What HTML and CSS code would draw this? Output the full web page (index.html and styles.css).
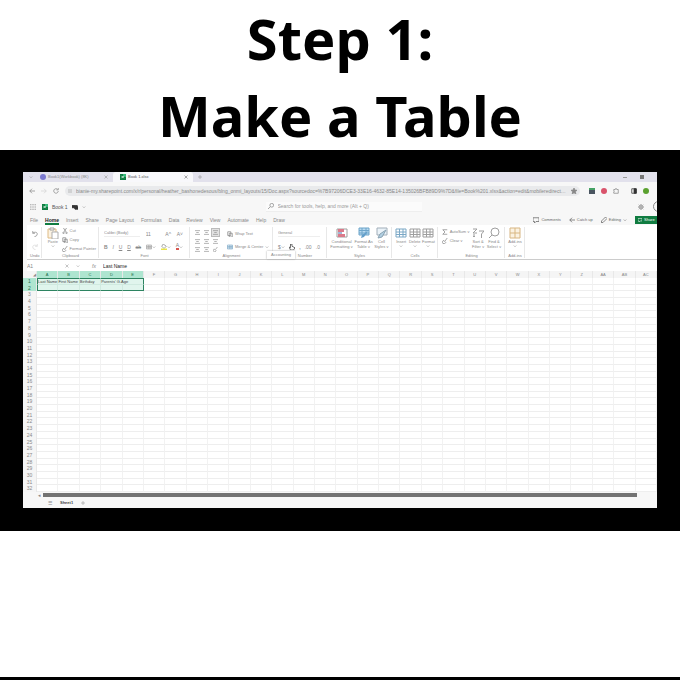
FILE: index.html
```html
<!DOCTYPE html>
<html lang="en">
<head>
  <meta charset="UTF-8" />
  <meta name="viewport" content="width=device-width, initial-scale=1" />
  <title>Step 1: Make a Table</title>
  <link rel="stylesheet" href="styles.css">
</head>
<body>
  <svg class="defs" aria-hidden="true">
    <symbol id="i-down" viewBox="0 0 8 8"><path d="M1.500 3l2.500 2.500L6.500 3" /></symbol>
    <symbol id="i-close" viewBox="0 0 8 8"><path d="M1 1l6 6M7 1L1 7" /></symbol>
    <symbol id="i-plus" viewBox="0 0 8 8"><path d="M4 0v8M0 4h8" /></symbol>
    <symbol id="i-back" viewBox="0 0 8 8"><path d="M8 4H1M4 1L1 4l3 3" /></symbol>
    <symbol id="i-forward" viewBox="0 0 8 8"><path d="M0 4h7M4 1l3 3-3 3" /></symbol>
    <symbol id="i-reload" viewBox="0 0 8 8"><path d="M7 4a3 3 0 1 1-1-2.300M7 0v2.500H4.500" /></symbol>
    <symbol id="i-tune" viewBox="0 0 8 8"><path d="M0 2h3M5 2h3M0 6h2M4 6h4M4 1v2M3 5v2" /></symbol>
    <symbol id="i-star" viewBox="0 0 8 8"><path d="M4 0l1.200 2.800L8 3 5.800 5 6.500 8 4 6.400 1.500 8l.7-3L0 3l2.800-.2z" fill="currentColor" /></symbol>
    <symbol id="i-search" viewBox="0 0 8 8"><circle cx="5" cy="3" r="2.500" /><path d="M3 5L0 8" /></symbol>
    <symbol id="i-find" viewBox="0 0 12 12"><circle cx="7" cy="5" r="4" /><path d="M4 8L1 11" /></symbol>
    <symbol id="i-puzzle" viewBox="0 0 8 8"><path d="M1 2h2c0-2 2-2 2 0h2v5H1V5c1 0 1-1.500 0-1.500z" /></symbol>
    <symbol id="i-panel" viewBox="0 0 8 8"><path d="M1 1h6v6H1z" /><path d="M4 1h3v6H4z" fill="currentColor" /></symbol>
    <symbol id="i-dots" viewBox="0 0 8 8"><path d="M0 1h2M3 1h2M6 1h2M0 4h2M3 4h2M6 4h2M0 7h2M3 7h2M6 7h2" /></symbol>
    <symbol id="i-excel" viewBox="0 0 8 8"><path d="M0 0h8v8H0z" fill="#107c41" stroke="none" /><path d="M4 0h4v4H4z" fill="#35b877" stroke="none" /><path d="M2 2.500l3 3M5 2.500l-3 3" stroke="#fff" /></symbol>
    <symbol id="i-cloud" viewBox="0 0 8 8"><path d="M0 2h3v3H0zM3 2h4l1 2v3H4L3 5z" fill="currentColor" /></symbol>
    <symbol id="i-gear" viewBox="0 0 8 8"><circle cx="4" cy="4" r="2.500" /><circle cx="4" cy="4" r="1" /><path d="M4 0v1.500M4 6.500V8M0 4h1.500M6.500 4H8M1 1l1 1M6 6l1 1M7 1L6 2M2 6L1 7" /></symbol>
    <symbol id="i-comment" viewBox="0 0 8 8"><path d="M0 1h8v5H4L2 8V6H0z" /></symbol>
    <symbol id="i-pen" viewBox="0 0 8 8"><path d="M0 8l1-3 5-5 2 2-5 5z" /></symbol>
    <symbol id="i-undo" viewBox="0 0 8 8"><path d="M1 0v3h3M1 3c2-2 6-2 6 1S4 7 3 8" /></symbol>
    <symbol id="i-redo" viewBox="0 0 8 8"><path d="M7 0v3H4M7 3C5 1 1 1 1 4s3 3 4 4" /></symbol>
    <symbol id="i-paste" viewBox="0 0 12 12"><path d="M1 2h8v9H1z" fill="#fbf0dc" stroke="#d8ab66" /><path d="M3 1h4v2H3z" fill="#fff" stroke="#888" /><path d="M5 5h6v7H5z" fill="#fff" stroke="#999" /></symbol>
    <symbol id="i-cut" viewBox="0 0 8 8"><path d="M2 0l3 5M6 0L3 5" /><circle cx="2" cy="6.500" r="1" /><circle cx="6" cy="6.500" r="1" /></symbol>
    <symbol id="i-copy" viewBox="0 0 8 8"><path d="M1 1h4v5H1zM3 3h4v5H3z" /></symbol>
    <symbol id="i-brush" viewBox="0 0 8 8"><path d="M7 0L4 4M2 3l3 3-2 2-3-2z" /></symbol>
    <symbol id="i-lines" viewBox="0 0 8 8"><path d="M0 1h8M2 4h4M0 7h8" /></symbol>
    <symbol id="i-grid" viewBox="0 0 12 10"><path d="M1 1h10v8H1zM1 4h10M1 6.500h10M4.500 1v8M8 1v8" /></symbol>
    <symbol id="i-cond" viewBox="0 0 12 10"><path d="M1 1h10v8H1z" fill="#fff" stroke="#888" /><path d="M2 1h6v3H2zM2 6h7v3H2z" fill="#d35a6e" stroke="none" /><path d="M2 4h4v2H2z" fill="#8aa6ce" stroke="none" /></symbol>
    <symbol id="i-ftable" viewBox="0 0 12 12"><path d="M1 1h10v7H1z" fill="#a9d3ee" stroke="#4a8fbd" /><path d="M1 3.500h10M1 6h10M4 1v7M8 1v7" stroke="#4a8fbd" /><path d="M10 4L6 10l-3 1 1-3z" fill="#3b87bd" stroke="none" /></symbol>
    <symbol id="i-styles" viewBox="0 0 12 12"><path d="M1 1h10v7H1z" fill="#e7f1f8" stroke="#8b9ba8" /><path d="M10 3L6 10l-4 1 2-4z" fill="#9fc5dd" stroke="#6d8ca0" /></symbol>
    <symbol id="i-sum" viewBox="0 0 8 8"><path d="M7 1H1l3 3-3 3h6" /></symbol>
    <symbol id="i-sort" viewBox="0 0 12 10"><path d="M1 1h4L1 5h4M7 3h5L9.500 6v4M2 6v3M1 8l1 1 1-1" /></symbol>
    <symbol id="i-addins" viewBox="0 0 12 12"><path d="M1 1h10v10H1zM6 1v10M1 6h10" fill="#fbf0dc" /></symbol>
    <symbol id="i-fill" viewBox="0 0 8 8"><path d="M3 0l4 3-3 3-3-3z" /><path d="M0 7h8" stroke="#e9e44a" stroke-width="2" /></symbol>
    <symbol id="i-hand" viewBox="0 0 8 8"><path d="M2 0v5L0 4l2 4h4l2-3-4-2V0z" fill="#fff" stroke="#444" /></symbol>
  </svg>

  <h1>Step 1:<br>Make a Table</h1>

  <main class="frame">
    <div class="screen">
      <div class="tabstrip">
        <svg class="icon tiny"><use href="#i-down" /></svg>
        <a class="tab" href="#"><span class="dot purple"></span><span class="tab-name">Book1(Workbook) (8K)</span><svg class="icon tiny"><use href="#i-close" /></svg></a>
        <a class="tab active" href="#"><svg class="icon"><use href="#i-excel" /></svg><span class="tab-name">Book 1.xlsx</span><svg class="icon tiny"><use href="#i-close" /></svg></a>
        <button class="new-tab" aria-label="New tab"><svg class="icon tiny"><use href="#i-plus" /></svg></button>
        <div class="win-buttons"><span class="min"></span><span class="restore"></span></div>
      </div>

      <div class="address">
        <button aria-label="Back"><svg class="icon"><use href="#i-back" /></svg></button>
        <button class="faded" aria-label="Forward"><svg class="icon"><use href="#i-forward" /></svg></button>
        <button aria-label="Reload"><svg class="icon"><use href="#i-reload" /></svg></button>
        <div class="url">
          <svg class="icon tiny"><use href="#i-tune" /></svg>
          <input type="text" aria-label="Address" value="bianie-my.sharepoint.com/x/r/personal/heather_bashonedesous/blng_onmi_layouts/15/Doc.aspx?sourcedoc=%7B97206DCE3-33E16-4632-85E14-135026BFB89D9%7D&amp;file=Book%201.xlsx&amp;action=edit&amp;mobileredirect=doublebiffesouth...">
          <svg class="icon"><use href="#i-star" /></svg>
        </div>
        <div class="extensions">
          <span class="ext-badge"></span>
          <span class="dot red"></span>
          <svg class="icon"><use href="#i-puzzle" /></svg>
          <svg class="icon panel"><use href="#i-panel" /></svg>
          <span class="dot green"></span>
        </div>
      </div>

      <header class="app-header">
        <div class="doc">
          <svg class="icon"><use href="#i-dots" /></svg>
          <svg class="icon"><use href="#i-excel" /></svg>
          <span class="doc-name">Book 1</span>
          <svg class="icon dark"><use href="#i-cloud" /></svg>
          <svg class="icon tiny"><use href="#i-down" /></svg>
        </div>
        <div class="search">
          <svg class="icon"><use href="#i-search" /></svg>
          <input type="search" aria-label="Search" placeholder="Search for tools, help, and more (Alt + Q)">
        </div>
        <div class="account"><svg class="icon"><use href="#i-gear" /></svg><span class="avatar"></span></div>
      </header>

      <nav class="menu">
        <a href="#">File</a>
        <a href="#" class="current">Home</a>
        <a href="#">Insert</a>
        <a href="#">Share</a>
        <a href="#">Page Layout</a>
        <a href="#">Formulas</a>
        <a href="#">Data</a>
        <a href="#">Review</a>
        <a href="#">View</a>
        <a href="#">Automate</a>
        <a href="#">Help</a>
        <a href="#">Draw</a>
        <div class="actions">
          <button><svg class="icon"><use href="#i-comment" /></svg>Comments</button>
          <button><svg class="icon"><use href="#i-back" /></svg>Catch up</button>
          <button><svg class="icon"><use href="#i-pen" /></svg>Editing<svg class="icon tiny"><use href="#i-down" /></svg></button>
          <button class="share"><svg class="icon tiny"><use href="#i-comment" /></svg>Share</button>
        </div>
      </nav>

      <div class="ribbon">
        <section class="group">
          <div class="stack">
            <button aria-label="Undo"><svg class="icon"><use href="#i-undo" /></svg></button>
            <button class="faded" aria-label="Redo"><svg class="icon"><use href="#i-redo" /></svg></button>
          </div>
          <span class="label">Undo</span>
        </section>
        <section class="group">
          <div class="body clipboard">
            <button class="big"><svg class="icon large"><use href="#i-paste" /></svg>Paste<svg class="icon tiny"><use href="#i-down" /></svg></button>
            <div class="stack left">
              <button><svg class="icon"><use href="#i-cut" /></svg>Cut</button>
              <button><svg class="icon"><use href="#i-copy" /></svg>Copy</button>
              <button><svg class="icon"><use href="#i-brush" /></svg>Format Painter</button>
            </div>
          </div>
          <span class="label">Clipboard</span>
        </section>
        <section class="group font">
          <div class="stack wide">
            <div class="line">
              <select class="font-name" aria-label="Font"><option>Calibri (Body)</option></select>
              <select class="font-size" aria-label="Font size"><option>11</option></select>
              <button>A^</button><button>A˅</button>
            </div>
            <div class="line">
              <button><b>B</b></button><button><i>I</i></button><button><u>U</u></button><button><u>D</u></button><button><s>ab</s></button>
              <button aria-label="Borders"><svg class="icon"><use href="#i-grid" /></svg><svg class="icon tiny"><use href="#i-down" /></svg></button>
              <button aria-label="Fill"><svg class="icon"><use href="#i-fill" /></svg><svg class="icon tiny"><use href="#i-down" /></svg></button>
              <button><span class="font-color">A</span><svg class="icon tiny"><use href="#i-down" /></svg></button>
            </div>
          </div>
          <span class="label">Font</span>
        </section>
        <section class="group">
          <div class="body">
            <div class="align">
              <button aria-label="Top"><svg class="icon"><use href="#i-lines" /></svg></button>
              <button aria-label="Middle"><svg class="icon"><use href="#i-lines" /></svg></button>
              <button class="on" aria-label="Bottom"><svg class="icon"><use href="#i-lines" /></svg></button>
              <button aria-label="Left"><svg class="icon"><use href="#i-lines" /></svg></button>
              <button aria-label="Center"><svg class="icon"><use href="#i-lines" /></svg></button>
              <button aria-label="Right"><svg class="icon"><use href="#i-lines" /></svg></button>
              <button aria-label="Outdent"><svg class="icon"><use href="#i-lines" /></svg></button>
              <button aria-label="Indent"><svg class="icon"><use href="#i-lines" /></svg></button>
              <button aria-label="Rotate"><svg class="icon"><use href="#i-brush" /></svg></button>
            </div>
            <div class="stack left wrap">
              <button><svg class="icon"><use href="#i-copy" /></svg>Wrap Text</button>
              <button><svg class="icon blue"><use href="#i-grid" /></svg>Merge &amp; Center<svg class="icon tiny"><use href="#i-down" /></svg></button>
            </div>
          </div>
          <span class="label">Alignment</span>
        </section>
        <section class="group number">
          <div class="stack wide">
            <select class="format" aria-label="Number format"><option>General</option></select>
            <div class="line">
              <button>$<svg class="icon tiny"><use href="#i-down" /></svg></button>
              <button aria-label="Percent"><svg class="icon"><use href="#i-hand" /></svg></button>
              <button><b>,</b></button><button>.00</button><button>.0</button>
            </div>
          </div>
          <span class="label">Number</span>
          <span class="tooltip">Accounting</span>
        </section>
        <section class="group">
          <div class="body spread">
            <button class="big"><svg class="icon large"><use href="#i-cond" /></svg>Conditional<br>Formatting ˅</button>
            <button class="big"><svg class="icon large"><use href="#i-ftable" /></svg>Format As<br>Table ˅</button>
            <button class="big"><svg class="icon large"><use href="#i-styles" /></svg>Cell<br>Styles ˅</button>
          </div>
          <span class="label">Styles</span>
        </section>
        <section class="group">
          <div class="body spread">
            <button class="big"><svg class="icon large blue"><use href="#i-grid" /></svg>Insert<svg class="icon tiny"><use href="#i-down" /></svg></button>
            <button class="big"><svg class="icon large"><use href="#i-grid" /></svg>Delete<svg class="icon tiny"><use href="#i-down" /></svg></button>
            <button class="big"><svg class="icon large"><use href="#i-grid" /></svg>Format<svg class="icon tiny"><use href="#i-down" /></svg></button>
          </div>
          <span class="label">Cells</span>
        </section>
        <section class="group">
          <div class="body spread">
            <div class="stack top">
              <button><svg class="icon"><use href="#i-sum" /></svg>AutoSum ˅</button>
              <button><svg class="icon"><use href="#i-brush" /></svg>Clear ˅</button>
            </div>
            <button class="big"><svg class="icon large"><use href="#i-sort" /></svg>Sort &amp;<br>Filter ˅</button>
            <button class="big"><svg class="icon large"><use href="#i-find" /></svg>Find &amp;<br>Select ˅</button>
          </div>
          <span class="label">Editing</span>
        </section>
        <section class="group">
          <div class="body spread">
            <button class="big"><svg class="icon large amber"><use href="#i-addins" /></svg>Add-ins<svg class="icon tiny"><use href="#i-down" /></svg></button>
          </div>
          <span class="label">Add-ins</span>
        </section>
      </div>

      <div class="formula">
        <input class="name-box" type="text" aria-label="Name box" value="A1">
        <svg class="icon tiny"><use href="#i-close" /></svg>
        <svg class="icon tiny"><use href="#i-down" /></svg>
        <i class="fx">fx</i>
        <input class="formula-box" type="text" aria-label="Formula bar" value="Last Name">
      </div>

      <table class="sheet">
        <thead><tr id="columns"><th class="corner">◢</th></tr></thead>
        <tbody id="rows"></tbody>
      </table>

      <div class="scroll"><span class="arrow">◂</span><div class="thumb"></div></div>
      <footer class="sheet-tabs">
        <button aria-label="All sheets">☰</button>
        <a href="#">Sheet1</a>
        <button aria-label="Add sheet"><svg class="icon tiny"><use href="#i-plus" /></svg></button>
      </footer>
    </div>
  </main>

  <script>
    const headings = ['Last Name', 'First Name', 'Birthday', "Parents' G.Age"];
    const columnCount = 29;
    const rowCount = 32;
    const columns = document.getElementById('columns');
    const rows = document.getElementById('rows');

    for (let c = 0; c < columnCount; c++) {
      const th = document.createElement('th');
      th.textContent = (c > 25 ? 'A' : '') + String.fromCharCode(65 + c % 26);
      if (c < 5) th.className = 'picked';
      columns.appendChild(th);
    }

    for (let r = 0; r < rowCount; r++) {
      const tr = document.createElement('tr');
      const th = document.createElement('th');
      th.textContent = r + 1;
      if (r < 2) th.className = 'picked';
      tr.appendChild(th);
      for (let c = 0; c < columnCount; c++) {
        const td = document.createElement('td');
        if (r === 0 && headings[c]) {
          td.textContent = headings[c];
          // long heading runs over the empty cell to its right
          if (c === 3) td.colSpan = 2;
        }
        if (r < 2 && c < 5) {
          td.classList.add('selected');
          if (r === 0) td.classList.add('edge-top');
          if (r === 1) td.classList.add('edge-bottom');
          if (c === 0) td.classList.add('edge-left');
          if (c + td.colSpan === 5) td.classList.add('edge-right');
        }
        if (td.colSpan === 2) {
          td.classList.add('double');
          c++;
        }
        tr.appendChild(td);
      }
      rows.appendChild(tr);
    }
  </script>
</body>
</html>
```

FILE: styles.css
```css
* {
  box-sizing: border-box;
}
body {
  margin: 0;
  min-height: 100vh;
  display: flex;
  flex-direction: column;
  background: #fff;
  border-bottom: 3px solid #000;
  font-family: "Liberation Sans", Arial, sans-serif;
}
h1 {
  margin: 0;
  height: 150px;
  font-family: "Noto Sans", "Open Sans", sans-serif;
  font-size: 56px;
  line-height: 77px;
  font-weight: bold;
  text-align: center;
  color: #000;
}
button, input, select {
  font: inherit;
  color: inherit;
  background: none;
  border: none;
  padding: 0;
  margin: 0;
  min-width: 0;
  appearance: none;
}
button {
  display: flex;
  align-items: center;
  gap: 2px;
  white-space: nowrap;
}
a {
  color: inherit;
  text-decoration: none;
}
.defs {
  display: none;
}
.icon {
  width: 6px;
  height: 6px;
  flex: none;
  fill: none;
  stroke: currentColor;
  stroke-width: 1px;
}
.tiny {
  width: 4px;
  height: 4px;
}
.large {
  width: 12px;
  height: 12px;
  opacity: 0.8;
}
.dark {
  color: #333;
}
.blue {
  color: #5b93b8;
}
.amber {
  color: #cfa564;
}
.faded {
  opacity: 0.3;
}
.dot {
  width: 6px;
  height: 6px;
  border-radius: 50%;
  flex: none;
}
.purple {
  background: #7b78cf;
}
.red {
  background: #d9536b;
}
.green {
  background: #5ba12f;
}
.frame {
  background: #000;
  padding: 22px 23px 23px;
}
.screen {
  background: #f7f7f7;
  font-size: 5px;
  line-height: 6px;
  color: #888;
  overflow: hidden;
}

/* browser */
.tabstrip {
  display: flex;
  align-items: center;
  height: 10px;
  padding-left: 6px;
  background: #e2e1ec;
}
.tab {
  display: flex;
  align-items: center;
  gap: 2px;
  width: 80px;
  height: 10px;
  padding: 0 5px 0 7px;
}
.tab.active {
  background: #f8f8fb;
  border-radius: 3px 3px 0 0;
  color: #555;
}
.tab-name {
  flex: 1;
  font-size: 4px;
}
.new-tab {
  margin-left: 5px;
}
.win-buttons {
  display: flex;
  align-items: center;
  gap: 13px;
  margin-left: auto;
  padding-right: 13px;
}
.min {
  width: 4px;
  height: 1px;
  background: #999;
}
.restore {
  width: 4px;
  height: 4px;
  background: #777;
}
.address {
  display: flex;
  align-items: center;
  gap: 6px;
  height: 17px;
  padding: 0 8px 0 6px;
}
.url {
  flex: 1;
  display: flex;
  align-items: center;
  gap: 4px;
  height: 10px;
  padding: 0 3px;
  border-radius: 5px;
  background: #e9eaec;
}
.url input {
  flex: 1;
  text-overflow: ellipsis;
}
.extensions {
  display: flex;
  align-items: center;
  gap: 6px;
  padding-left: 3px;
}
.panel {
  margin-left: 6px;
  color: #333;
}
.ext-badge {
  width: 6px;
  height: 6px;
  background: #4a5560;
  border-top: 2px solid #45a164;
}

/* app header */
.app-header {
  display: flex;
  justify-content: space-between;
  align-items: center;
  height: 15px;
  padding-left: 7px;
}
.doc {
  display: flex;
  align-items: center;
  gap: 4px;
  width: 232px;
}
.doc .icon:first-child {
  margin-right: 2px;
}
.doc-name {
  color: #555;
}
.search {
  display: flex;
  align-items: center;
  gap: 4px;
  width: 156px;
  height: 10px;
  padding-left: 2px;
  background: #fbfbfb;
  border-bottom: 1px solid #eee;
}
.search input {
  flex: 1;
}
.search input::placeholder {
  color: #999;
}
.account {
  display: flex;
  align-items: center;
  justify-content: flex-end;
  gap: 9px;
  width: 239px;
  margin-right: -7px;
}
.avatar {
  width: 11px;
  height: 11px;
  border: 1px solid #888;
  border-radius: 50%;
}
.menu {
  display: flex;
  align-items: center;
  gap: 7px;
  height: 11px;
  padding-left: 7px;
}
.menu .current {
  color: #222;
  font-weight: bold;
  box-shadow: 0 2px #107c41;
}
.actions {
  display: flex;
  align-items: center;
  gap: 8px;
  height: 9px;
  margin-left: auto;
  font-size: 4px;
  color: #666;
}
.actions .share {
  height: 8px;
  width: 22px;
  padding-left: 3px;
  background: #107c41;
  color: #fff;
}

/* ribbon */
.ribbon {
  display: grid;
  grid-template-columns: 15px 57px 91px 83px 54px 65px 46px 67px 20px;
  height: 35px;
  margin-left: 4px;
  padding: 2px 0 1px;
  background: #fff;
  border-bottom: 1px solid #ccc;
  font-size: 4px;
}
.group {
  display: flex;
  flex-direction: column;
  justify-content: space-between;
  padding: 0 2px 0 3px;
  border-right: 1px solid #e8e8e8;
}
.label {
  line-height: 5px;
  text-align: center;
  white-space: nowrap;
}
.body {
  display: flex;
  gap: 3px;
}
.clipboard {
  padding-left: 2px;
}
.spread {
  justify-content: space-around;
  gap: 1px;
}
.stack {
  display: flex;
  flex-direction: column;
  align-items: center;
  justify-content: space-around;
  height: 26px;
}
.left {
  align-items: flex-start;
}
.wrap {
  padding-left: 4px;
}
.wide {
  align-items: stretch;
}
.top {
  align-items: flex-start;
  justify-content: flex-start;
  gap: 3px;
  padding-top: 2px;
}
.line {
  display: flex;
  align-items: center;
  justify-content: space-between;
  font-size: 5px;
}
.line button {
  gap: 0;
}
.font .line {
  padding-right: 4px;
}
.font .stack {
  padding-left: 2px;
}
.big {
  flex-direction: column;
  gap: 0;
  line-height: 5px;
}
.font-name {
  width: 36px;
  font-size: 4px;
  border-bottom: 1px solid #eee;
}
.font-size {
  width: 14px;
}
.format {
  border-bottom: 1px solid #eee;
}
.font-color {
  line-height: 5px;
  border-bottom: 2px solid #d8574f;
}
.align {
  display: grid;
  grid-template-columns: repeat(3, 9px);
  align-items: center;
  justify-items: center;
  height: 26px;
}
.align .icon {
  width: 5px;
  height: 5px;
}
.on {
  padding: 1px;
  background: #e2e2e2;
  outline: 1px solid #bbb;
}
.number {
  position: relative;
}
.number .label {
  text-align: right;
  padding-right: 12px;
}
.number .stack {
  padding: 0 4px 0 2px;
}
.tooltip {
  position: absolute;
  left: -6px;
  bottom: -1px;
  width: 28px;
  height: 8px;
  line-height: 8px;
  text-align: center;
  background: #fff;
  box-shadow: 0 0 2px #999;
}

/* formula bar and sheet */
.formula {
  display: flex;
  align-items: center;
  gap: 7px;
  height: 11px;
  margin-left: 4px;
  background: #fff;
}
.name-box {
  width: 31px;
}
.fx {
  margin-left: 5px;
}
.formula-box {
  flex: 1;
  color: #222;
}
.sheet {
  display: block;
  background: #fff;
}
.sheet thead {
  display: block;
}
.sheet tbody {
  display: grid;
  grid-auto-rows: 1fr;
  height: 214px;
}
.sheet tr {
  display: grid;
  grid-template-columns: 14px repeat(29, minmax(0, 1fr));
  min-height: 0;
}
.sheet th {
  padding: 0;
  background: #f5f5f5;
  border-right: 1px solid #e8e8e8;
  font-size: 4px;
  font-weight: normal;
  text-align: center;
}
.sheet thead th {
  height: 7px;
  line-height: 7px;
}
.sheet tbody th {
  min-height: 0;
  font-size: 5px;
}
.sheet td {
  min-height: 0;
  padding: 0;
  border-right: 1px solid #f2f2f2;
  border-bottom: 1px solid #eee;
  color: #444;
  white-space: nowrap;
  font-size: 4px;
  line-height: 6px;
}
.sheet .double {
  grid-column: span 2;
}
.sheet .picked {
  background: #aee5d0;
  color: #1d6f4c;
}
.sheet .corner {
  text-align: right;
}
.sheet .selected {
  background: #e0f5ed;
  border-color: #d0eae0;
}
.sheet .edge-top {
  border-top: 1px solid #2d8461;
  line-height: 5px;
}
.sheet .edge-bottom {
  border-bottom: 1px solid #2d8461;
}
.sheet .edge-left {
  border-left: 1px solid #2d8461;
}
.sheet .edge-right {
  border-right: 1px solid #2d8461;
}
.scroll {
  display: flex;
  align-items: center;
  height: 6px;
  padding: 0 20px 0 15px;
}
.arrow {
  width: 5px;
}
.thumb {
  flex: 1;
  height: 4px;
  background: #737373;
}
.sheet-tabs {
  display: flex;
  align-items: center;
  gap: 8px;
  height: 10px;
  padding-left: 25px;
}
.sheet-tabs a {
  color: #444;
  font-size: 4px;
  font-weight: bold;
}
```
